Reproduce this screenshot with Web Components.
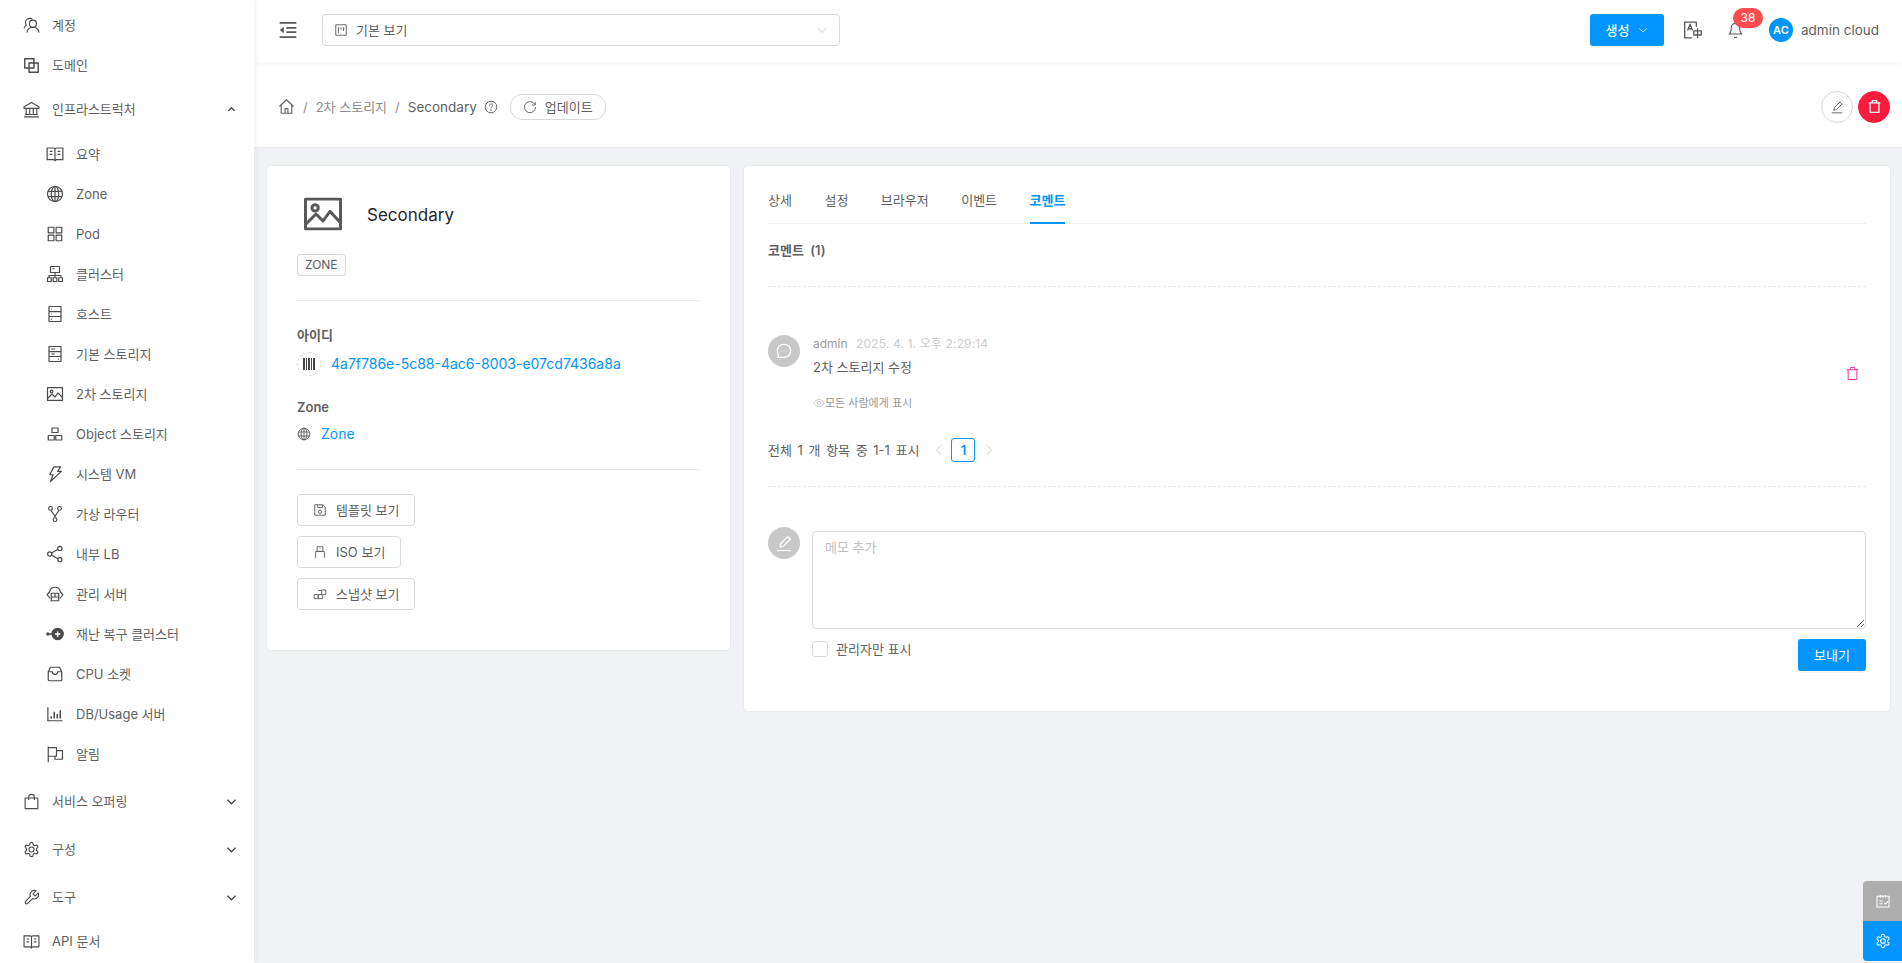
<!DOCTYPE html>
<html lang="ko">
<head>
<meta charset="utf-8">
<title>Secondary</title>
<style>
    html, body { margin: 0; height: 100%; overflow: hidden; }
    body {
        background: #f0f2f6;
        color: #5f5f5f;
        font: 14px/20px Inter, "Noto Sans CJK KR", sans-serif;
    }
    #app { display: grid; grid-template-columns: 254px 1fr; height: 963px; }
    #main { display: flex; flex-direction: column; min-width: 0; }
</style>
</head>
<body>
<div id="app">
    <app-sidebar></app-sidebar>
    <div id="main">
        <app-topbar></app-topbar>
        <page-head></page-head>
        <page-body>
            <zone-card></zone-card>
            <comment-panel></comment-panel>
        </page-body>
    </div>
</div>
<float-dock></float-dock>

<script>
const ICONS = {
    team: '<circle cx="14" cy="9.5" r="5"/><path d="M5.5 22c.5-4.500 4-7.500 8.500-7.500s8 3 8.500 7.500"/><path d="M1.500 16c.5-2 1.700-3.500 3.200-4.500C3.900 10.500 3.500 9.300 3.500 8c0-3.300 2.700-6 6-6 1.500 0 2.800.5 3.900 1.400"/>',
    block: '<rect x="2.500" y="2.500" width="13" height="13" stroke-width="2"/><rect x="8.500" y="8.500" width="13" height="13" stroke-width="2"/>',
    bank: '<path d="M12 2 1.500 8v2.500h21V8z"/><path d="M4.500 10.500V19M9.500 10.500V19M14.500 10.500V19M19.500 10.500V19M3 19h18M1.500 22.500h21"/>',
    read: '<path d="M1.500 4h8.500c1 0 2 .8 2 1.800C12 4.800 13 4 14 4h8.500v15.500H14c-1 0-2 .6-2 1.500 0-.9-1-1.500-2-1.500H1.500z"/><path d="M12 6v15M5 8.500h3.500M5 12.500h3.500M15.500 8.500H19M15.500 12.500H19"/>',
    global: '<circle cx="12" cy="12" r="10"/><ellipse cx="12" cy="12" rx="5" ry="10"/><path d="M12 2v20M2.800 8.500h18.400M2.800 15.500h18.400"/>',
    appstore: '<rect x="3" y="3" width="7.500" height="7.500"/><rect x="13.500" y="3" width="7.500" height="7.500"/><rect x="3" y="13.500" width="7.500" height="7.500"/><rect x="13.500" y="13.500" width="7.500" height="7.500"/>',
    cluster: '<rect x="6" y="2" width="12" height="8"/><path d="M12 10v4M4 17v-3h16v3M12 14v3M8.500 5h3"/><rect x="2" y="17" width="5" height="5"/><rect x="9.500" y="17" width="5" height="5"/><rect x="17" y="17" width="5" height="5"/>',
    database: '<rect x="4" y="2" width="16" height="20"/><path d="M4 8.700h16M4 15.300h16M7 5.300h1M7 12h1M7 18.700h1"/>',
    hdd: '<rect x="4" y="2" width="16" height="20"/><path d="M4 8.700h16M4 15.300h16M7 5.300h5M7 12h5M16 18.700h1"/>',
    picture: '<rect x="2" y="3.500" width="20" height="17"/><circle cx="7.500" cy="8.500" r="1.800"/><path d="M2 18l6-6 4 4 4-5.500 6 6.500"/>',
    gold: '<rect x="8" y="4" width="8" height="6"/><rect x="3" y="14" width="8" height="6"/><rect x="13" y="14" width="8" height="6"/>',
    thunder: '<path d="M10.500 2.500h9l-4 6h5L6 22l3.500-9H5z"/>',
    fork: '<circle cx="6" cy="4.500" r="2.500"/><circle cx="18" cy="4.500" r="2.500"/><circle cx="12" cy="19.500" r="2.500"/><path d="M6.800 7C8 11 12 11.500 12 17M17.200 7C16 11 12 11.500 12 17"/>',
    share: '<circle cx="18.500" cy="4.500" r="2.800"/><circle cx="5" cy="12" r="2.800"/><circle cx="18.500" cy="19.500" r="2.800"/><path d="M16 5.800 7.500 10.600M16 18.200l-8.500-4.800"/>',
    cloud: '<path d="M5.500 18 1.500 13l3.500-4C5.500 5.500 8.500 3 12 3s6.500 2.500 7 6l3.500 4-4 5"/><rect x="7" y="11" width="10" height="10"/><path d="M7 16h10M12 11v5"/>',
    drcluster: '<path d="M3 12h7" stroke-width="2"/><circle cx="2.500" cy="12" r="1.500" fill="currentColor"/><circle cx="15.500" cy="12" r="7.500" fill="currentColor"/><path d="M15.500 8.500v7M12 12h7" stroke="#fff" stroke-width="2"/>',
    inbox: '<path d="M6 3h12l3 6v10.500a1.500 1.500 0 0 1-1.500 1.500h-15A1.500 1.500 0 0 1 3 19.500V9z"/><path d="M3 9h5.500c0 2 1.500 3.500 3.500 3.500s3.500-1.500 3.500-3.500H21"/>',
    barchart: '<path d="M2.500 3v18h19.500"/><path d="M7 18v-3M11 18V9M15 18v-6M19 18V7" stroke-width="2"/>',
    flag: '<path d="M3 2v21M3 3.500h11V15H3M14 7.500h8V19H12v-4"/>',
    shopping: '<rect x="3" y="7" width="18" height="15"/><path d="M8 10V6a4 4 0 0 1 8 0v4"/>',
    setting: '<path d="M12.220 2h-.44a2 2 0 0 0-2 2v.18a2 2 0 0 1-1 1.730l-.43.25a2 2 0 0 1-2 0l-.15-.08a2 2 0 0 0-2.730.73l-.22.38a2 2 0 0 0 .73 2.730l.15.1a2 2 0 0 1 1 1.720v.51a2 2 0 0 1-1 1.740l-.15.09a2 2 0 0 0-.73 2.730l.22.38a2 2 0 0 0 2.730.73l.15-.08a2 2 0 0 1 2 0l.43.25a2 2 0 0 1 1 1.730V20a2 2 0 0 0 2 2h.44a2 2 0 0 0 2-2v-.18a2 2 0 0 1 1-1.730l.43-.25a2 2 0 0 1 2 0l.15.08a2 2 0 0 0 2.730-.73l.22-.39a2 2 0 0 0-.73-2.730l-.15-.08a2 2 0 0 1-1-1.740v-.5a2 2 0 0 1 1-1.740l.15-.09a2 2 0 0 0 .73-2.730l-.22-.38a2 2 0 0 0-2.730-.73l-.15.08a2 2 0 0 1-2 0l-.43-.25a2 2 0 0 1-1-1.730V4a2 2 0 0 0-2-2z"/><circle cx="12" cy="12" r="3.500"/>',
    tool: '<path d="M14.700 6.300a1 1 0 0 0 0 1.400l1.600 1.600a1 1 0 0 0 1.400 0l3.770-3.770a6 6 0 0 1-7.940 7.940l-6.910 6.910a2.120 2.120 0 0 1-3-3l6.910-6.910a6 6 0 0 1 7.940-7.940l-3.760 3.760z"/>',
    outdent: '<path d="M2 3.500h20M10 9.500h12M10 14.500h12M2 20.500h20" stroke-width="2"/><path d="M7 8v8l-5-4z" fill="currentColor" stroke="none"/>',
    project: '<rect x="3" y="3" width="18" height="18"/><path d="M7.500 7v10M12 7v4M16.500 7v7"/>',
    down: '<path d="M3 8l9 9 9-9"/>',
    up: '<path d="M5 15l7-7 7 7"/>',
    left: '<path d="M16 3l-9 9 9 9"/>',
    right: '<path d="M8 3l9 9-9 9"/>',
    translate: '<path d="M16 8V2.500H2v19h9"/><path d="M5.500 12.500 8.500 5l3 7.500M6.500 10.500h4"/><rect x="13" y="13" width="9" height="5"/><path d="M17.500 10v12"/>',
    bell: '<path d="M6 8a6 6 0 0 1 12 0c0 7 3 9 3 9H3s3-2 3-9"/><path d="M10.300 21a1.940 1.940 0 0 0 3.400 0"/>',
    home: '<path d="M2 12 12 2.500 22 12"/><path d="M4.500 10v11.500h15V10M10 21.500V15h4v6.500"/>',
    question: '<circle cx="12" cy="12" r="10"/><path d="M9.300 9.500a2.800 2.800 0 1 1 4.300 2.400c-1 .6-1.600 1.200-1.600 2.300"/><circle cx="12" cy="17.200" r=".6" fill="currentColor"/>',
    reload: '<path d="M20.500 8A9.500 9.500 0 1 0 21.500 12"/><path d="M21 3v5.500h-5.500" />',
    edit: '<path d="M3 22h18"/><path d="M6.500 17.500l1-4.500L17 3.500l3.500 3.500-9.500 9.500z"/>',
    trash: '<path d="M2.500 6h19M8.500 6V2.500h7V6M5 6v15.500h14V6"/>',
    save: '<path d="M3 3h14l4 4v14H3z"/><path d="M8 3v5h8V3"/><circle cx="12" cy="15" r="2.800"/>',
    usb: '<path d="M7 3h10v8H7zM4.500 22V11h15v11M10 6.500h1M13 6.500h1"/>',
    build: '<path d="M2 13h7v7H2zM9 13h7v7H9zM9 6h6v7M15 5h7v8h-6"/>',
    message: '<path d="M12 3c5 0 9 3.800 9 8.700s-4 8.800-9 8.800H3.500l1.500-3A8.600 8.600 0 0 1 3 11.700C3 6.800 7 3 12 3z"/><path d="M8 12h.6M11.700 12h.6M15.400 12h.6" stroke-width="2"/>',
    eye: '<path d="M1.500 12C4 7.500 7.500 5 12 5s8 2.500 10.500 7c-2.500 4.500-6 7-10.500 7s-8-2.500-10.500-7z"/><circle cx="12" cy="12" r="3.500"/>',
    plan: '<rect x="3" y="5" width="18" height="16"/><path d="M8 3v4M12 3v4M16 3v4M6.500 12h5M6.500 16h5M14 14.500l2 2 3.500-4"/>'
};

class UiIcon extends HTMLElement {
    connectedCallback() {
        const size = this.getAttribute('size') || 16;
        const sw = this.getAttribute('sw') || 1.6;
        this.attachShadow({ mode: 'open' });
        this.shadowRoot.innerHTML = `
        <style>
            :host { display: inline-flex; flex: none; line-height: 0; }
            svg { display: block; }
        </style>
        <svg xmlns="http://www.w3.org/2000/svg" width="${size}" height="${size}" viewBox="0 0 24 24" fill="none" stroke="currentColor" stroke-width="${sw}" stroke-linejoin="round">${ICONS[this.getAttribute('name')] || ''}</svg>`;
    }
}
customElements.define('ui-icon', UiIcon);

class NavItem extends HTMLElement {
    connectedCallback() {
        const sub = this.hasAttribute('sub');
        const arrow = this.getAttribute('arrow');
        this.attachShadow({ mode: 'open' });
        this.shadowRoot.innerHTML = `
        <style>
            :host { display: block; }
            .row {
                display: flex;
                align-items: center;
                height: 40px;
                padding-left: ${sub ? 46 : 23}px;
                padding-right: 17px;
                color: #5f5f5f;
                font-size: 13px;
            }
            ui-icon { color: #4a4a4a; }
            .label { margin-left: ${sub ? 12 : 12}px; flex: 1; white-space: nowrap; }
            .arrow { color: #444; }
        </style>
        <div class="row">
            <ui-icon name="${this.getAttribute('icon')}" size="${sub ? 18 : 17}"></ui-icon>
            <span class="label"><slot></slot></span>
            ${arrow ? `<ui-icon class="arrow" name="${arrow}" size="11" sw="3"></ui-icon>` : ''}
        </div>`;
    }
}
customElements.define('nav-item', NavItem);

class AppSidebar extends HTMLElement {
    connectedCallback() {
        this.attachShadow({ mode: 'open' });
        this.shadowRoot.innerHTML = `
        <style>
            :host {
                display: block;
                background: #fff;
                box-shadow: 2px 0 6px rgba(0, 21, 41, .05);
                overflow: hidden;
                position: relative;
                z-index: 3;
                padding-top: 5px;
            }
            .g4 { height: 4px; }
            .g5 { height: 5px; }
            .g7 { height: 7px; }
            .g8 { height: 8px; }
        </style>
        <nav-item icon="team">계정</nav-item>
        <nav-item icon="block">도메인</nav-item>
        <div class="g4"></div>
        <nav-item icon="bank" arrow="up">인프라스트럭처</nav-item>
        <div class="g5"></div>
        <nav-item sub icon="read">요약</nav-item>
        <nav-item sub icon="global">Zone</nav-item>
        <nav-item sub icon="appstore">Pod</nav-item>
        <nav-item sub icon="cluster">클러스터</nav-item>
        <nav-item sub icon="database">호스트</nav-item>
        <nav-item sub icon="hdd">기본 스토리지</nav-item>
        <nav-item sub icon="picture">2차 스토리지</nav-item>
        <nav-item sub icon="gold">Object 스토리지</nav-item>
        <nav-item sub icon="thunder">시스템 VM</nav-item>
        <nav-item sub icon="fork">가상 라우터</nav-item>
        <nav-item sub icon="share">내부 LB</nav-item>
        <nav-item sub icon="cloud">관리 서버</nav-item>
        <nav-item sub icon="drcluster">재난 복구 클러스터</nav-item>
        <nav-item sub icon="inbox">CPU 소켓</nav-item>
        <nav-item sub icon="barchart">DB/Usage 서버</nav-item>
        <nav-item sub icon="flag">알림</nav-item>
        <div class="g7"></div>
        <nav-item icon="shopping" arrow="down">서비스 오퍼링</nav-item>
        <div class="g8"></div>
        <nav-item icon="setting" arrow="down">구성</nav-item>
        <div class="g8"></div>
        <nav-item icon="tool" arrow="down">도구</nav-item>
        <div class="g4"></div>
        <nav-item icon="read">API 문서</nav-item>`;
    }
}
customElements.define('app-sidebar', AppSidebar);

class AppTopbar extends HTMLElement {
    connectedCallback() {
        this.attachShadow({ mode: 'open' });
        this.shadowRoot.innerHTML = `
        <style>
            :host {
                display: flex;
                align-items: center;
                height: 62px;
                box-sizing: border-box;
                padding: 0 23px 2px 24px;
                background: #fff;
                box-shadow: 0 1px 4px rgba(0, 21, 41, .06);
                position: relative;
                z-index: 2;
            }
            .burger { color: #595959; margin-right: 24px; }
            .select {
                display: flex;
                align-items: center;
                width: 518px;
                height: 32px;
                box-sizing: border-box;
                border: 1px solid #d9d9d9;
                border-radius: 4px;
                padding: 0 11px;
                font-size: 13px;
                color: #5f5f5f;
            }
            .select span { margin-left: 8px; flex: 1; }
            .chev { color: #bfbfbf; }
            .spacer { flex: 1; }
            .create {
                display: flex;
                align-items: center;
                justify-content: center;
                gap: 9px;
                width: 74px;
                height: 32px;
                background: #0095ff;
                color: #fff;
                border-radius: 3px;
                font-size: 13px;
                font-weight: 500;
                box-shadow: 0 2px 0 rgba(0, 0, 0, .04);
            }
            .lang { margin-left: 19px; color: #595959; }
            .bell { position: relative; margin-left: 24px; color: #595959; display: flex; }
            .badge {
                position: absolute;
                left: 6px;
                top: -14px;
                min-width: 30px;
                height: 20px;
                box-sizing: border-box;
                background: #ff4d4f;
                color: #fff;
                border-radius: 10px;
                font-size: 12px;
                line-height: 20px;
                text-align: center;
            }
            .avatar {
                width: 24px;
                height: 24px;
                margin-left: 25px;
                border-radius: 50%;
                background: #0095ff;
                color: #fff;
                font-size: 11px;
                font-weight: 600;
                line-height: 24px;
                text-align: center;
            }
            .user { margin-left: 8px; color: #5f5f5f; font-size: 13.5px; white-space: nowrap; }
        </style>
        <ui-icon class="burger" name="outdent" size="20" sw="1.300"></ui-icon>
        <div class="select">
            <ui-icon name="project" size="14"></ui-icon>
            <span>기본 보기</span>
            <ui-icon class="chev" name="down" size="12" sw="1.500"></ui-icon>
        </div>
        <div class="spacer"></div>
        <div class="create">생성 <ui-icon name="down" size="10" sw="2"></ui-icon></div>
        <ui-icon class="lang" name="translate" size="20"></ui-icon>
        <div class="bell"><ui-icon name="bell" size="17"></ui-icon><div class="badge">38</div></div>
        <div class="avatar">AC</div>
        <div class="user">admin cloud</div>`;
    }
}
customElements.define('app-topbar', AppTopbar);

class PageHead extends HTMLElement {
    connectedCallback() {
        this.attachShadow({ mode: 'open' });
        this.shadowRoot.innerHTML = `
        <style>
            :host {
                display: flex;
                align-items: center;
                height: 86px;
                box-sizing: border-box;
                padding: 4px 12px 0 24px;
                background: #fff;
                border-bottom: 1px solid #e8e8e8;
                font-size: 13px;
                color: #5f5f5f;
            }
            .sep { margin: 0 8px; color: #8c8c8c; }
            .muted { color: #8c8c8c; }
            .cur { font-size: 13.5px; }
            .q { margin-left: 7px; }
            .refresh {
                display: flex;
                align-items: center;
                gap: 8px;
                height: 24px;
                margin-left: 12px;
                padding: 0 12px;
                border: 1px solid #d9d9d9;
                border-radius: 12px;
            }
            .spacer { flex: 1; }
            .round {
                display: flex;
                align-items: center;
                justify-content: center;
                width: 32px;
                height: 32px;
                box-sizing: border-box;
                border-radius: 50%;
                border: 1px solid #d9d9d9;
                background: #fff;
            }
            .round.danger { margin-left: 5px; background: #ff1a3d; border-color: #ff1a3d; color: #fff; }
        </style>
        <ui-icon name="home" size="17"></ui-icon>
        <span class="sep">/</span>
        <span class="muted">2차 스토리지</span>
        <span class="sep">/</span>
        <span class="cur">Secondary</span>
        <ui-icon class="q" name="question" size="14"></ui-icon>
        <div class="refresh"><ui-icon name="reload" size="14"></ui-icon>업데이트</div>
        <div class="spacer"></div>
        <div class="round"><ui-icon name="edit" size="14"></ui-icon></div>
        <div class="round danger"><ui-icon name="trash" size="15" sw="2"></ui-icon></div>`;
    }
}
customElements.define('page-head', PageHead);

class PageBody extends HTMLElement {
    connectedCallback() {
        this.attachShadow({ mode: 'open' });
        this.shadowRoot.innerHTML = `
        <style>
            :host {
                display: grid;
                grid-template-columns: 463px 1fr;
                align-items: start;
                gap: 14px;
                padding: 18px 12px 0 13px;
            }
        </style>
        <slot></slot>`;
    }
}
customElements.define('page-body', PageBody);

class ZoneCard extends HTMLElement {
    connectedCallback() {
        this.attachShadow({ mode: 'open' });
        this.shadowRoot.innerHTML = `
        <style>
            :host {
                display: block;
                height: 484px;
                box-sizing: border-box;
                padding: 33px 30px 0;
                background: #fff;
                border-radius: 4px;
                box-shadow: 0 0 2px rgba(0, 0, 0, .12);
                color: #5f5f5f;
            }
            .title { display: flex; align-items: center; height: 30px; padding-left: 5px; }
            .title ui-icon { color: #595959; }
            .title span { margin-left: 23px; font-size: 17px; color: #262626; position: relative; top: 1px; }
            .tag {
                display: inline-block;
                margin-top: 25px;
                height: 22px;
                padding: 0 7px;
                box-sizing: border-box;
                border: 1px solid #d9d9d9;
                border-radius: 3px;
                background: #fafafa;
                font-size: 12px;
                line-height: 20px;
            }
            hr { border: 0; border-top: 1px solid #e8e8e8; margin: 0; }
            .h1 { margin-top: 24px; }
            .label { font-weight: 600; font-size: 13px; height: 20px; }
            .id { margin-top: 24px; }
            .value { display: flex; align-items: center; margin-top: 7px; }
            a { color: #0095ff; text-decoration: none; font-size: 14px; }
            .ring {
                display: flex;
                align-items: center;
                justify-content: center;
                width: 24px;
                height: 24px;
                box-sizing: border-box;
                margin-right: 10px;
                border: 1px dashed #d9d9d9;
                border-radius: 50%;
                color: #444;
            }
            .bars { display: flex; gap: 1px; align-items: stretch; height: 12px; }
            .bars i { display: block; background: #444; width: 1px; }
            .bars i.w { width: 2px; }
            .zone-label { margin-top: 21px; }
            .zone-value { margin-top: 7px; }
            .zone-value ui-icon { margin-right: 10px; }
            .h2 { margin-top: 25px; }
            .btns { display: flex; flex-direction: column; align-items: flex-start; gap: 10px; margin-top: 24px; }
            .btn {
                display: flex;
                align-items: center;
                gap: 9px;
                height: 32px;
                box-sizing: border-box;
                padding: 0 15px;
                border: 1px solid #d9d9d9;
                border-radius: 4px;
                font-size: 13px;
            }
        </style>
        <div class="title"><ui-icon name="picture" size="42" sw="1.700"></ui-icon><span>Secondary</span></div>
        <div class="tag">ZONE</div>
        <hr class="h1">
        <div class="label id">아이디</div>
        <div class="value">
            <div class="ring"><div class="bars"><i class="w"></i><i></i><i class="w"></i><i></i><i class="w"></i></div></div>
            <a>4a7f786e-5c88-4ac6-8003-e07cd7436a8a</a>
        </div>
        <div class="label zone-label">Zone</div>
        <div class="value zone-value"><ui-icon name="global" size="14"></ui-icon><a>Zone</a></div>
        <hr class="h2">
        <div class="btns">
            <div class="btn"><ui-icon name="save" size="14"></ui-icon>템플릿 보기</div>
            <div class="btn"><ui-icon name="usb" size="14"></ui-icon>ISO 보기</div>
            <div class="btn"><ui-icon name="build" size="14"></ui-icon>스냅샷 보기</div>
        </div>`;
    }
}
customElements.define('zone-card', ZoneCard);

class CommentPanel extends HTMLElement {
    connectedCallback() {
        this.attachShadow({ mode: 'open' });
        this.shadowRoot.innerHTML = `
        <style>
            :host {
                display: block;
                height: 545px;
                box-sizing: border-box;
                padding: 0 24px;
                background: #fff;
                border-radius: 4px;
                box-shadow: 0 0 2px rgba(0, 0, 0, .12);
                color: #5f5f5f;
                font-size: 13px;
            }
            .tabs {
                display: flex;
                gap: 32.500px;
                height: 58px;
                box-sizing: border-box;
                border-bottom: 1px solid #f0f0f0;
            }
            .tabs div { padding-top: 24px; height: 58px; box-sizing: border-box; }
            .tabs .on { color: #0095ff; font-weight: 600; border-bottom: 2px solid #0095ff; }
            .heading { margin-top: 16px; font-weight: 600; height: 20px; word-spacing: 3px; }
            .dash { border: 0; border-top: 1px dashed #e8e8e8; margin: 0; }
            .d1 { margin-top: 26px; }
            .comment { display: flex; margin-top: 48px; height: 101px; }
            .avatar {
                display: flex;
                align-items: center;
                justify-content: center;
                flex: none;
                width: 32px;
                height: 32px;
                border-radius: 50%;
                background: #c8c8c8;
                color: #fff;
            }
            .cbody { margin-left: 13px; flex: 1; }
            .meta { font-size: 12px; line-height: 18px; color: #999; }
            .meta span { margin-left: 5px; color: #ccc; letter-spacing: .15px; }
            .text { margin-top: 3px; line-height: 22px; color: #5f5f5f; }
            .vis {
                display: flex;
                align-items: center;
                margin-top: 16px;
                font-size: 11px;
                line-height: 18px;
                color: #999;
            }
            .vis ui-icon { color: #bfbfbf; }
            .del { color: #eb2f96; margin-top: 31px; margin-right: 6px; }
            .pager { display: flex; align-items: center; height: 24px; margin-top: 2px; }
            .pager span { word-spacing: 2px; }
            .pager .left { margin-left: 14px; color: #bfbfbf; }
            .pager .num {
                width: 24px;
                height: 24px;
                box-sizing: border-box;
                margin: 0 8px 0 6px;
                border: 1px solid #0095ff;
                border-radius: 3px;
                color: #0095ff;
                font-weight: 600;
                line-height: 22px;
                text-align: center;
            }
            .pager .right { color: #bfbfbf; }
            .d2 { margin-top: 24px; }
            .editor { display: flex; margin-top: 40px; position: relative; }
            .form { margin-left: 12px; flex: 1; margin-top: 4px; }
            textarea {
                display: block;
                width: 100%;
                height: 98px;
                box-sizing: border-box;
                padding: 5px 12px;
                border: 1px solid #d9d9d9;
                border-radius: 4px;
                outline: 0;
                font: inherit;
                color: #595959;
            }
            textarea::placeholder { color: #bfbfbf; }
            .foot { display: flex; justify-content: space-between; margin-top: 10px; }
            .check { display: flex; align-items: center; height: 32px; margin-top: -6px; align-self: flex-start; }
            .box {
                width: 16px;
                height: 16px;
                box-sizing: border-box;
                margin-right: 8px;
                border: 1px solid #d9d9d9;
                border-radius: 3px;
            }
            .send {
                width: 68px;
                height: 32px;
                background: #0095ff;
                color: #fff;
                border-radius: 3px;
                line-height: 32px;
                text-align: center;
                box-shadow: 0 2px 0 rgba(0, 0, 0, .04);
            }
        </style>
        <div class="tabs">
            <div>상세</div><div>설정</div><div>브라우저</div><div>이벤트</div><div class="on">코멘트</div>
        </div>
        <div class="heading">코멘트 (1)</div>
        <hr class="dash d1">
        <div class="comment">
            <div class="avatar"><ui-icon name="message" size="18"></ui-icon></div>
            <div class="cbody">
                <div class="meta">admin <span>2025. 4. 1. 오후 2:29:14</span></div>
                <div class="text">2차 스토리지 수정</div>
                <div class="vis"><ui-icon name="eye" size="12"></ui-icon>모든 사람에게 표시</div>
            </div>
            <ui-icon class="del" name="trash" size="15"></ui-icon>
        </div>
        <div class="pager">
            <span>전체 1 개 항목 중 1-1 표시</span>
            <ui-icon class="left" name="left" size="12"></ui-icon>
            <div class="num">1</div>
            <ui-icon class="right" name="right" size="12"></ui-icon>
        </div>
        <hr class="dash d2">
        <div class="editor">
            <div class="avatar"><ui-icon name="edit" size="18"></ui-icon></div>
            <div class="form">
                <textarea placeholder="메모 추가"></textarea>
                <div class="foot">
                    <div class="check"><div class="box"></div>관리자만 표시</div>
                    <div class="send">보내기</div>
                </div>
            </div>
        </div>`;
    }
}
customElements.define('comment-panel', CommentPanel);

class FloatDock extends HTMLElement {
    connectedCallback() {
        this.attachShadow({ mode: 'open' });
        this.shadowRoot.innerHTML = `
        <style>
            :host { position: fixed; right: 0; top: 881px; z-index: 5; display: block; }
            div {
                display: flex;
                align-items: center;
                justify-content: center;
                width: 39px;
                height: 40px;
                color: #fff;
                background: #adadad;
                border-radius: 4px 0 0 0;
            }
            div + div { background: #0095ff; border-radius: 0 0 0 4px; }
        </style>
        <div><ui-icon name="plan" size="16"></ui-icon></div>
        <div><ui-icon name="setting" size="16"></ui-icon></div>`;
    }
}
customElements.define('float-dock', FloatDock);
</script>
</body>
</html>
